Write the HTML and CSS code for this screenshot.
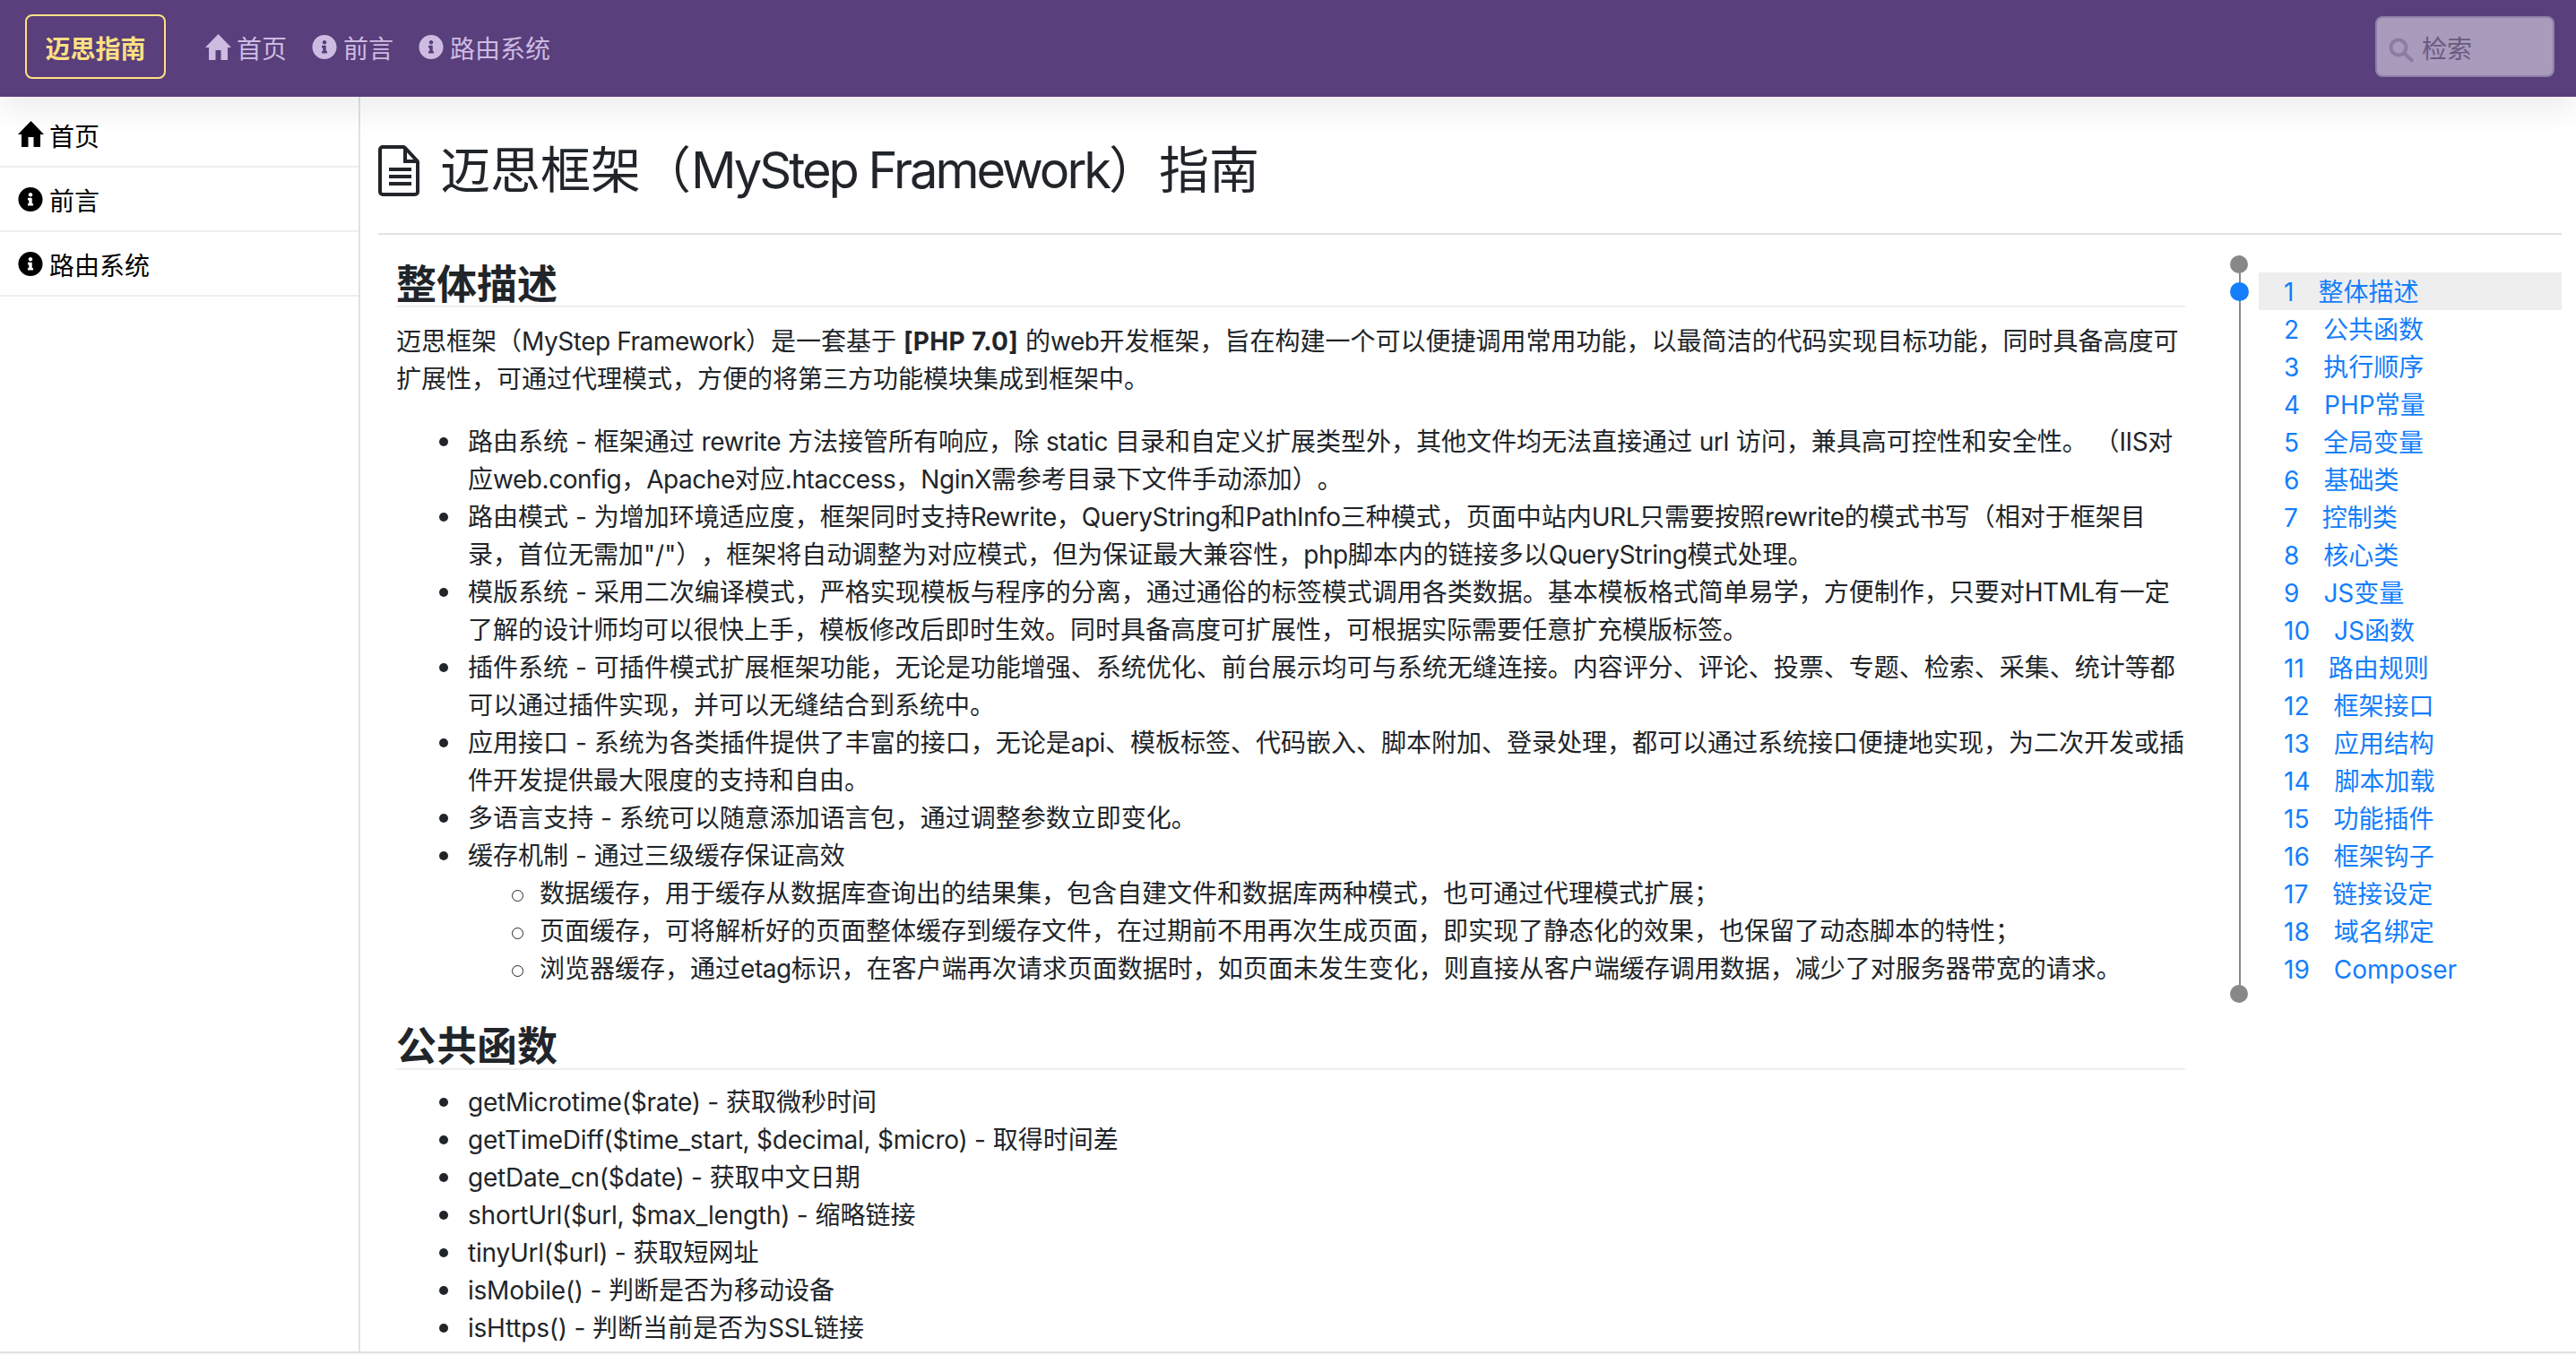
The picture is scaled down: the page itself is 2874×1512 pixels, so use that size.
FILE: index.html
```html
<!DOCTYPE html>
<html lang="zh-CN">
<head>
<meta charset="utf-8">
<title>迈思框架（MyStep Framework）指南</title>
<link rel="stylesheet" href="styles.css">
</head>
<body>
<svg class="sprite" aria-hidden="true">
  <symbol id="i-home" viewBox="0 0 29 29"><path d="M14.5 0 29 15h-4v14h-7.5V18h-6v11H4V15H0z"/></symbol>
  <symbol id="i-info" viewBox="0 0 512 512"><path d="M256 8C119.043 8 8 119.083 8 256c0 136.997 111.043 248 248 248s248-111.003 248-248C504 119.083 392.957 8 256 8zm0 110c23.196 0 42 18.804 42 42s-18.804 42-42 42-42-18.804-42-42 18.804-42 42-42zm56 254c0 6.627-5.373 12-12 12h-88c-6.627 0-12-5.373-12-12v-24c0-6.627 5.373-12 12-12h12v-64h-12c-6.627 0-12-5.373-12-12v-24c0-6.627 5.373-12 12-12h64c6.627 0 12 5.373 12 12v100h12c6.627 0 12 5.373 12 12v24z"/></symbol>
</svg>
<header class="navbar">
  <a class="brand">迈思指南</a>
  <nav class="topnav">
    <a class="topnav-item"><svg class="ic-home"><use href="#i-home"/></svg>首页</a>
    <a class="topnav-item"><svg class="ic-info"><use href="#i-info"/></svg>前言</a>
    <a class="topnav-item"><svg class="ic-info"><use href="#i-info"/></svg>路由系统</a>
  </nav>
  <label class="search">
    <svg class="search-icon" viewBox="0 0 29 28"><circle cx="11" cy="11" r="8.5"/><path d="M17.5 17.5 27 26.5"/></svg>
    <input class="search-input" type="text" placeholder="检索">
  </label>
</header>
<div class="frame">
  <aside class="sidebar">
    <a class="side-item"><svg class="ic-home"><use href="#i-home"/></svg>首页</a>
    <a class="side-item"><svg class="ic-info"><use href="#i-info"/></svg>前言</a>
    <a class="side-item"><svg class="ic-info"><use href="#i-info"/></svg>路由系统</a>
  </aside>
  <main class="main">
    <h1 class="page-title">
      <svg class="title-icon" viewBox="0 0 47 57"><path class="doc" d="M2 5a3 3 0 0 1 3-3h23a3 3 0 0 1 2 1l13 14a3 3 0 0 1 1 2v33a3 3 0 0 1-3 3H5a3 3 0 0 1-3-3z"/><path class="doc" d="M30 3v15h14"/><path class="doc" d="M12 27h25M12 35h25M12 43h25"/></svg>
      <span>迈思框架（<span class="en-title">MyStep Framework</span>）指南</span>
    </h1>
    <div class="content">
      <article class="article">
        <h2>整体描述</h2>
        <p>迈思框架（<span class="en">MyStep Framework</span>）是一套基于 <strong>[PHP 7.0]</strong> 的<span class="en">web</span>开发框架，旨在构建一个可以便捷调用常用功能，以最简洁的代码实现目标功能，同时具备高度可扩展性，可通过代理模式，方便的将第三方功能模块集成到框架中。</p>
        <ul>
          <li>路由系统 - 框架通过 <span class="en">rewrite</span> 方法接管所有响应，除 <span class="en">static</span> 目录和自定义扩展类型外，其他文件均无法直接通过 <span class="en">url</span> 访问，兼具高可控性和安全性。 （<span class="en">IIS</span>对应<span class="en">web.config</span>，<span class="en">Apache</span>对应<span class="en">.htaccess</span>，<span class="en">NginX</span>需参考目录下文件手动添加）。</li>
          <li>路由模式 - 为增加环境适应度，框架同时支持<span class="en">Rewrite</span>，<span class="en">QueryString</span>和<span class="en">PathInfo</span>三种模式，页面中站内<span class="en">URL</span>只需要按照<span class="en">rewrite</span>的模式书写（相对于框架目录，首位无需加"/"），框架将自动调整为对应模式，但为保证最大兼容性，<span class="en">php</span>脚本内的链接多以<span class="en">QueryString</span>模式处理。</li>
          <li>模版系统 - 采用二次编译模式，严格实现模板与程序的分离，通过通俗的标签模式调用各类数据。基本模板格式简单易学，方便制作，只要对<span class="en">HTML</span>有一定了解的设计师均可以很快上手，模板修改后即时生效。同时具备高度可扩展性，可根据实际需要任意扩充模版标签。</li>
          <li>插件系统 - 可插件模式扩展框架功能，无论是功能增强、系统优化、前台展示均可与系统无缝连接。内容评分、评论、投票、专题、检索、采集、统计等都可以通过插件实现，并可以无缝结合到系统中。</li>
          <li>应用接口 - 系统为各类插件提供了丰富的接口，无论是<span class="en">api</span>、模板标签、代码嵌入、脚本附加、登录处理，都可以通过系统接口便捷地实现，为二次开发或插件开发提供最大限度的支持和自由。</li>
          <li>多语言支持 - 系统可以随意添加语言包，通过调整参数立即变化。</li>
          <li>缓存机制 - 通过三级缓存保证高效
            <ul>
              <li>数据缓存，用于缓存从数据库查询出的结果集，包含自建文件和数据库两种模式，也可通过代理模式扩展；</li>
              <li>页面缓存，可将解析好的页面整体缓存到缓存文件，在过期前不用再次生成页面，即实现了静态化的效果，也保留了动态脚本的特性；</li>
              <li>浏览器缓存，通过<span class="en">etag</span>标识，在客户端再次请求页面数据时，如页面未发生变化，则直接从客户端缓存调用数据，减少了对服务器带宽的请求。</li>
            </ul>
          </li>
        </ul>
        <h2 class="later">公共函数</h2>
        <ul class="funcs">
          <li><span class="en">getMicrotime($rate) -</span> 获取微秒时间</li>
          <li><span class="en">getTimeDiff($time_start, $decimal, $micro) -</span> 取得时间差</li>
          <li><span class="en">getDate_cn($date) -</span> 获取中文日期</li>
          <li><span class="en">shortUrl($url, $max_length) -</span> 缩略链接</li>
          <li><span class="en">tinyUrl($url) -</span> 获取短网址</li>
          <li><span class="en">isMobile() -</span> 判断是否为移动设备</li>
          <li><span class="en">isHttps() -</span> 判断当前是否为<span class="en">SSL</span>链接</li>
        </ul>
      </article>
      <aside class="toc">
        <div class="rail"><span class="dot"></span><span class="dot dot-active"></span><span class="dot dot-end"></span></div>
        <ol class="toc-list">
          <li class="toc-item active"><span class="num">1</span>整体描述</li>
          <li class="toc-item"><span class="num">2</span>公共函数</li>
          <li class="toc-item"><span class="num">3</span>执行顺序</li>
          <li class="toc-item"><span class="num">4</span>PHP常量</li>
          <li class="toc-item"><span class="num">5</span>全局变量</li>
          <li class="toc-item"><span class="num">6</span>基础类</li>
          <li class="toc-item"><span class="num">7</span>控制类</li>
          <li class="toc-item"><span class="num">8</span>核心类</li>
          <li class="toc-item"><span class="num">9</span>JS变量</li>
          <li class="toc-item"><span class="num">10</span>JS函数</li>
          <li class="toc-item"><span class="num">11</span>路由规则</li>
          <li class="toc-item"><span class="num">12</span>框架接口</li>
          <li class="toc-item"><span class="num">13</span>应用结构</li>
          <li class="toc-item"><span class="num">14</span>脚本加载</li>
          <li class="toc-item"><span class="num">15</span>功能插件</li>
          <li class="toc-item"><span class="num">16</span>框架钩子</li>
          <li class="toc-item"><span class="num">17</span>链接设定</li>
          <li class="toc-item"><span class="num">18</span>域名绑定</li>
          <li class="toc-item"><span class="num">19</span>Composer</li>
        </ol>
      </aside>
    </div>
  </main>
</div>
<footer class="footer"></footer>
</body>
</html>
```

FILE: styles.css
```css
* { box-sizing: border-box; }
html, body { height: 100%; }
body {
  margin: 0;
  height: 100vh;
  overflow: hidden;
  display: flex;
  flex-direction: column;
  background: #fff;
  color: #212529;
  font-family: Inter, "Noto Sans CJK SC", sans-serif;
  font-size: 28px;
  line-height: 42px;
  text-spacing-trim: space-all;
}
.sprite { display: none; }
svg { fill: currentColor; flex: none; }
.ic-home { width: 29px; height: 29px; margin-right: 6px; transform: translateY(-3px); }
.ic-info { width: 28px; height: 28px; margin-right: 7px; transform: translateY(-2.5px); }
.en { letter-spacing: -.016em; }
.funcs .en { letter-spacing: -.008em; }
.en-title { letter-spacing: -.054em; }

.navbar {
  flex: none;
  height: 108px;
  display: flex;
  align-items: center;
  padding: 0 24px 4px 28px;
  background: #593f7b;
  position: relative;
  z-index: 2;
  box-shadow: 0 16px 32px rgba(0, 0, 0, .07);
}
.brand {
  width: 157px;
  height: 72px;
  display: flex;
  align-items: center;
  justify-content: center;
  padding-top: 5px;
  border: 2px solid #ffe083;
  border-radius: 8px;
  color: #ffe083;
  font-weight: 700;
}
.topnav { display: flex; gap: 28px; margin-left: 44px; padding-top: 6px; }
.topnav-item { display: flex; align-items: center; color: #cdbbe2; }
.search {
  margin-left: auto;
  width: 200px;
  height: 68px;
  display: flex;
  align-items: center;
  gap: 8px;
  padding: 0 0 0 13px;
  background: #a99bbb;
  border: 2px solid #8f7fa8;
  border-radius: 8px;
}
.search-icon { width: 29px; height: 28px; margin-top: 8px; fill: none; stroke: #8c7ca3; stroke-width: 4; }
.search-input {
  flex: 1;
  min-width: 0;
  border: 0;
  padding: 5px 0 0;
  background: transparent;
  font: inherit;
  color: #6a5a80;
  outline: none;
}
.search-input::placeholder { color: #6a5a80; opacity: 1; }

.frame { flex: 1; min-height: 0; display: flex; }
.sidebar {
  flex: none;
  width: 402px;
  padding-top: 7px;
  border-right: 2px solid #dee2e6;
}
.side-item {
  height: 72px;
  display: flex;
  align-items: center;
  padding: 5px 0 0 20px;
  color: #000;
  border-bottom: 2px solid #eee;
}
.main { flex: 1; min-width: 0; overflow: hidden; padding: 0 16px 0 20px; }
.page-title {
  margin: 0;
  height: 154px;
  display: flex;
  align-items: center;
  gap: 22px;
  padding-top: 12px;
  border-bottom: 2px solid #dee2e6;
  font-size: 56px;
  font-weight: 400;
  line-height: 67px;
  white-space: nowrap;
}
.title-icon { width: 47px; height: 57px; }
.doc { fill: none; stroke: #212529; stroke-width: 4; }
.content { display: flex; }
.article { flex: 1; min-width: 0; margin: 0 50px 0 20px; }
.article h2 {
  margin: 29px 0 17px;
  padding-top: 4px;
  font-size: 45px;
  font-weight: 700;
  line-height: 46px;
  border-bottom: 2px solid #eee;
}
.article h2.later { margin: 40px 0 15px; padding-top: 2px; line-height: 48px; }
.article p { margin: 0 0 28px; }
.article ul { margin: 0; padding: 0 0 0 80px; list-style: none; }
.article li { position: relative; }
.article li::before {
  content: "";
  position: absolute;
  top: 16px;
  left: -32px;
  width: 10px;
  height: 10px;
  border-radius: 50%;
  background: #212529;
}
.article li li::before {
  top: 17px;
  left: -31px;
  width: 11px;
  height: 11px;
  background: none;
  border: 1.5px solid #212529;
}
.article strong { font-weight: 700; letter-spacing: .012em; }

.toc { flex: none; width: 370px; display: flex; gap: 12px; margin-top: 23px; align-self: flex-start; }
.rail {
  width: 20px;
  position: relative;
  display: flex;
  flex-direction: column;
  justify-content: space-between;
  align-items: center;
}
.rail::before {
  content: "";
  position: absolute;
  top: 0;
  bottom: 0;
  left: 10px;
  width: 2px;
  background: #888;
}
.dot { position: relative; width: 20px; height: 20px; border-radius: 50%; background: #888; }
.dot-active { position: absolute; top: 30px; left: 0; width: 21px; height: 21px; background: #147efb; }
.toc-list { flex: 1; list-style: none; margin: 0; padding: 19px 0 17px; }
.toc-item { height: 42px; padding-left: 28px; line-height: 45px; color: #147efb; white-space: nowrap; }
.toc-item.active { background: #eee; }
.num { margin-right: 27px; }

.footer { flex: none; height: 4px; background: #f8f9fa; border-top: 2px solid #dee2e6; }
```
